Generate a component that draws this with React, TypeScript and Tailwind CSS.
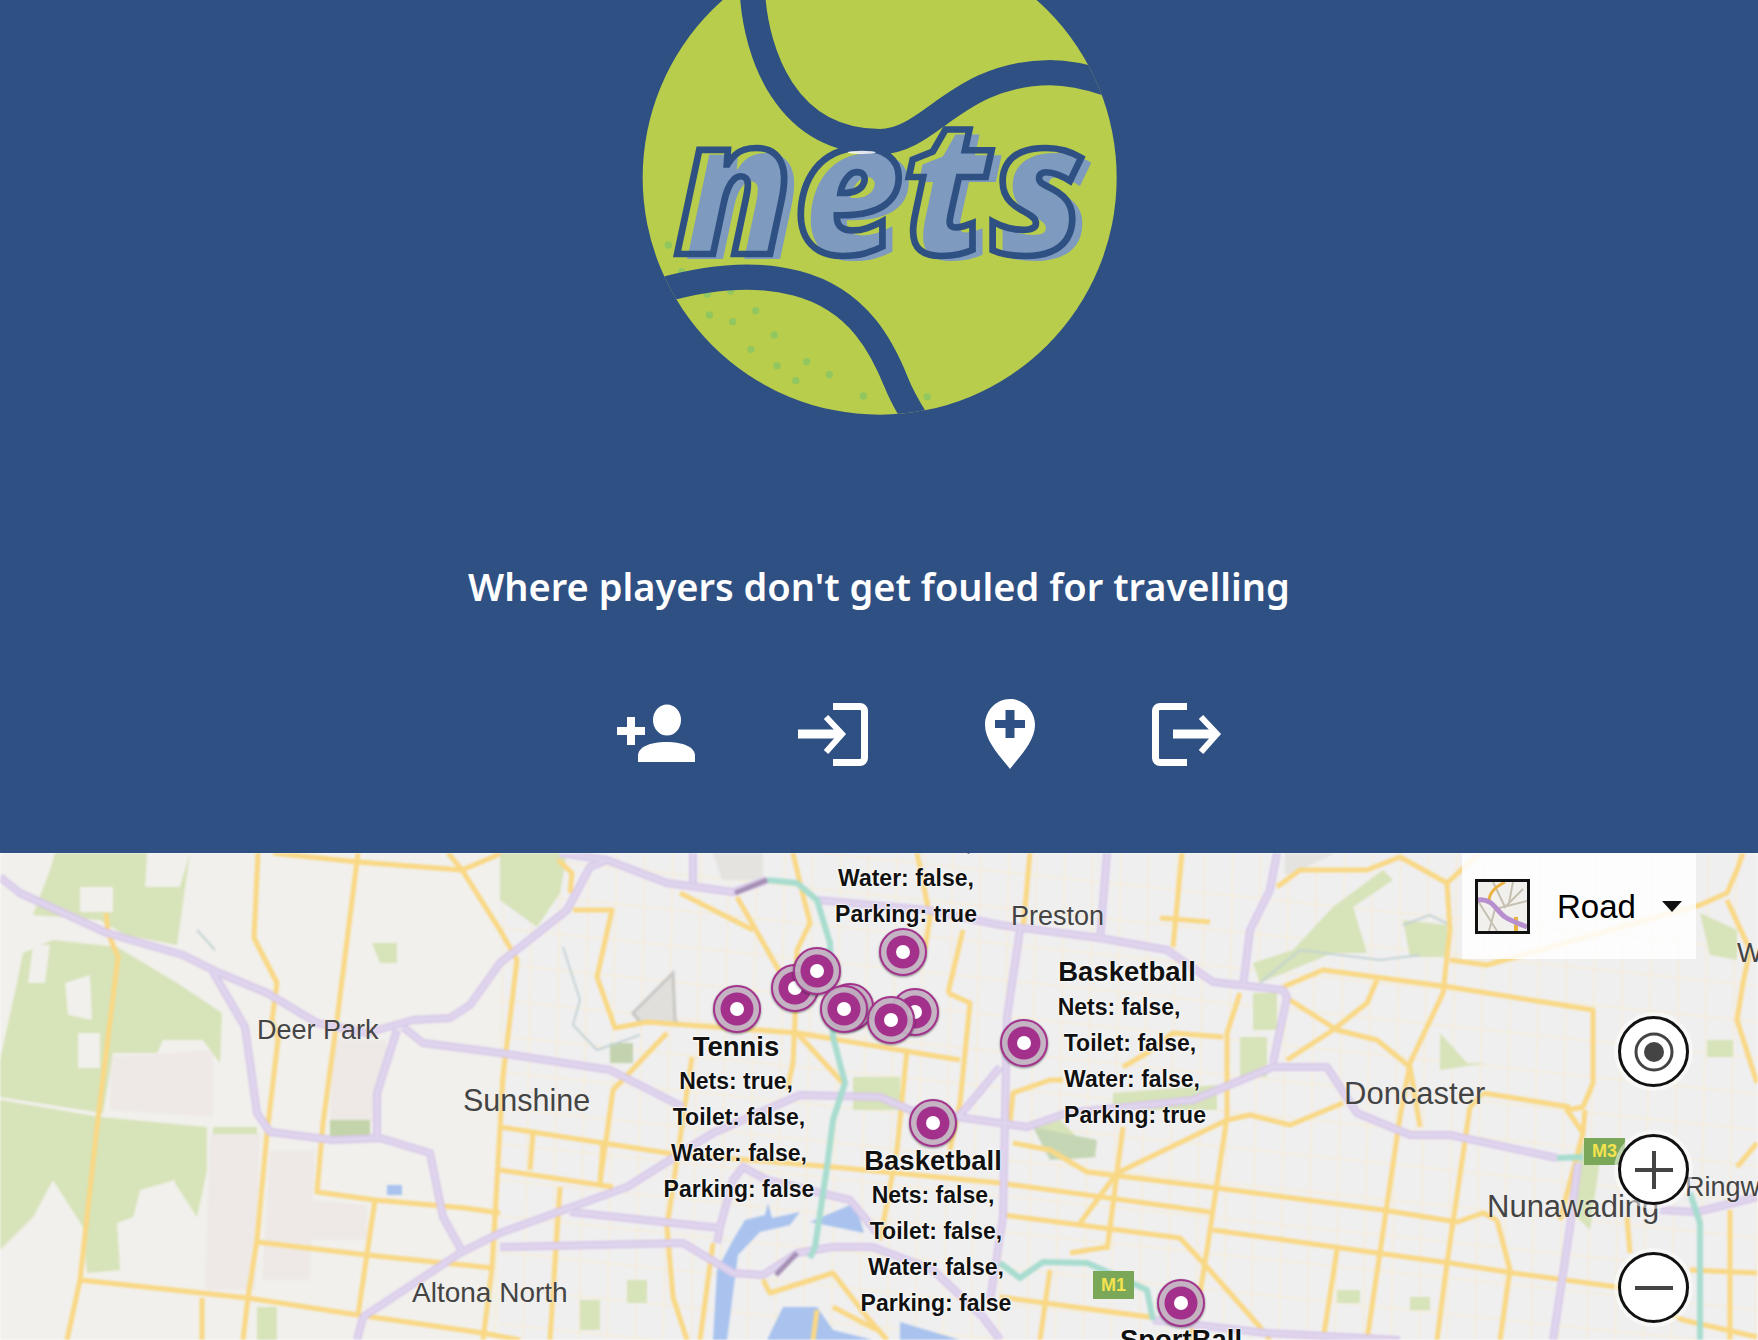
const BLUE = "#2f5083";

// map data, all in page coordinates (viewBox starts at y=853)
const yellowRoads = [
  "258,853 254,938 277,983 272,1020 278,1040 267,1133 257,1240 248,1297 243,1340",
  "358,853 337,1020 323,1123 317,1192 375,1200 465,1208 500,1213",
  "106,913 108,933 118,957 97,1127 80,1280 67,1340",
  "80,1280 248,1298 358,1315 483,1333 520,1340",
  "257,1242 367,1255 493,1268",
  "375,1200 358,1315",
  "273,853 358,862 462,870 500,930 517,960 503,1077 492,1268 483,1340",
  "448,853 462,870 493,857 500,853",
  "202,1298 202,1340",
  "558,860 572,873 570,893",
  "573,910 612,910 597,977 615,1028 647,1022 797,1033 960,1060",
  "667,1033 613,1090 600,1183",
  "948,993 970,1003 960,1103 950,1150",
  "963,930 948,993",
  "500,1127 667,1153 833,1167 1000,1183 1210,1212",
  "500,1170 613,1187",
  "533,1133 530,1170",
  "560,1187 550,1340",
  "603,1143 600,1183",
  "680,893 753,930",
  "737,897 777,967 795,1000",
  "793,853 800,883 810,923 797,950 795,1020 793,1063 787,1090",
  "797,1033 843,1083",
  "917,853 930,917 925,950",
  "907,1050 897,1150 880,1240",
  "692,1057 667,1227 673,1297 687,1340",
  "713,1243 700,1340",
  "763,1280 770,1293 833,1273 867,1317 887,1340",
  "817,1310 813,1340",
  "833,1307 877,1330",
  "1030,853 1023,930",
  "1182,853 1173,947",
  "1160,918 1210,922",
  "1277,887 1300,870 1367,870 1400,857 1447,883 1450,930 1443,993 1410,1063 1400,1117 1367,1340",
  "1283,987 1323,970 1450,987 1593,1010 1593,1083 1583,1107 1567,1110 1583,1133",
  "1290,1000 1337,1030 1377,1040 1410,1067 1420,1127",
  "1377,980 1367,1003 1333,1030 1287,1060",
  "1240,993 1227,1033 1227,1117 1207,1250 1200,1293 1190,1340",
  "1010,1123 1013,1093 1050,1080 1063,1080",
  "1123,1067 1147,1053 1173,1033 1223,1037",
  "1227,1120 1117,1173 1080,1223",
  "1227,1120 1250,1115 1290,1125 1343,1103",
  "1123,1127 1117,1173 1107,1250",
  "1013,1143 1050,1150 1087,1172 1217,1188 1383,1210 1457,1222 1483,1213 1497,1220",
  "1003,1215 1180,1238 1207,1267 1260,1327 1270,1340",
  "1213,1230 1377,1253 1450,1263 1513,1273 1617,1287 1683,1320 1757,1337",
  "1470,1107 1447,1263 1437,1340",
  "1337,1250 1323,1340",
  "1050,1270 1040,1340",
  "1000,1297 1150,1317",
  "1070,1253 1107,1247",
  "1483,1093 1570,1107",
  "1450,960 1487,965 1700,905 1727,893 1737,870 1743,853",
  "1727,900 1750,950 1743,983 1737,1020 1757,1083",
  "1470,1107 1483,1093",
  "1497,1220 1510,1270 1500,1340",
  "1585,1110 1583,1133 1560,1220",
  "1627,1217 1630,1253",
  "1730,1210 1730,1340",
  "1690,1270 1757,1273",
  "1737,1167 1757,1143",
  "1447,883 1480,853",
];

const purpleRoads = [
  "0,877 20,893 107,933 183,955 217,972 267,993 317,1023 367,1033 413,1020 450,1018 470,1005 500,963 567,910 590,867 607,860 667,883 733,892 767,880",
  "560,853 607,860",
  "213,972 245,1027 257,1113 270,1132 333,1140 380,1138 430,1153 443,1217 463,1253",
  "397,1030 377,1093 377,1137",
  "403,1027 423,1043 500,1053 610,1070 683,1107",
  "357,1340 363,1317 460,1253 500,1233 627,1187 713,1133 800,1095 880,1097 910,1110 957,1117 1000,1123 1027,1127 1067,1113 1193,1100 1273,1067 1327,1067 1357,1113 1410,1135 1450,1135 1557,1158",
  "500,1247 683,1243 733,1273 763,1275 797,1253 833,1247 873,1247 933,1270 983,1317 1000,1340",
  "570,1212 720,1228 717,1243",
  "720,1227 733,1180 743,1167 767,1180 850,1200 877,1233",
  "817,900 927,910 1000,925 1100,938 1167,950 1213,982 1283,990 1287,997 1273,1063",
  "1107,853 1100,940",
  "1020,930 1007,1017 1003,1217 990,1300",
  "1000,1067 967,1107 957,1117",
  "1277,853 1270,890 1250,930 1243,987",
  "693,853 693,883",
  "1578,1163 1570,1227 1553,1340",
  "1660,1210 1697,1212 1757,1197",
  "1153,1320 1267,1333 1400,1340",
];

const tealRoads = [
  "767,880 797,883 817,900 830,943 833,1037 845,1083 833,1120 827,1167 815,1247 810,1258",
  "1000,1263 1020,1278 1043,1262 1087,1263 1110,1273 1147,1290 1153,1320",
  "1557,1158 1583,1157",
  "1690,1193 1700,1223 1700,1340",
];

const greenAreas = [
  "55,853 190,853 177,945 125,935 100,920 33,915 50,870",
  "17,983 23,953 53,940 117,947 177,983 222,1013 220,1063 203,1040 163,1040 157,1053 113,1053 103,1113 0,1097 0,1060",
  "0,1100 100,1117 207,1127 207,1170 197,1217 173,1180 133,1217 117,1223 120,1270 87,1273 83,1227 53,1180 33,1217 0,1250",
  "500,853 567,853 560,893 537,927 500,900",
  "1293,950 1333,907 1383,870 1393,880 1353,907 1367,953 1333,953 1260,983 1253,963",
  "1403,920 1447,925 1447,957 1410,957",
  "1240,1037 1267,1037 1267,1077 1240,1077",
  "1253,993 1277,993 1277,1030 1253,1030",
  "1033,1127 1060,1120 1097,1157 1060,1160",
  "1113,1093 1217,1085 1217,1110 1113,1110",
  "1440,1033 1467,1063 1487,1063 1440,1070",
  "853,1077 900,1077 900,1110 853,1110",
  "1700,913 1737,930 1737,960 1710,955",
  "1707,1040 1733,1040 1733,1057 1707,1057",
  "257,1307 277,1307 277,1340 257,1340",
  "580,1300 600,1300 600,1330 580,1330",
  "627,1280 647,1280 647,1303 627,1303",
  "372,943 397,943 397,963 380,963",
  "1580,1140 1600,1160 1590,1230 1570,1210",
  "1337,1290 1360,1290 1360,1303 1337,1303",
  "1410,1297 1430,1297 1430,1310 1410,1310",
];

// the pale gaps in the farmland
const clearings = [
  "65,983 90,975 92,1020 68,1015",
  "78,1033 100,1033 100,1068 78,1068",
  "33,945 50,945 45,983 28,983",
  "80,887 113,887 113,912 80,912",
  "147,853 190,853 180,887 145,887",
  "140,1190 175,1180 170,1230 130,1230",
];

const pinkAreas = [
  "110,1057 213,1050 213,1117 110,1110",
  "210,1133 260,1133 255,1290 205,1290",
  "310,1200 367,1205 367,1240 310,1240",
  "333,1040 387,1040 380,1123 330,1120",
  "270,1150 315,1150 310,1280 262,1280",
];

const waterAreas = [
  "767,1340 783,1307 817,1307 833,1330 873,1340",
  "713,1340 717,1270 733,1240 745,1220 765,1215 768,1203 772,1218 800,1212 790,1225 760,1232 738,1255 727,1340",
  "810,1222 855,1203 864,1233 840,1228",
  "387,1185 402,1185 402,1195 387,1195",
  "900,1322 960,1340 900,1340",
];

const creeks = [
  "563,947 580,1000 573,1025 597,1050 640,1035",
  "1260,983 1300,950 1380,960 1420,955",
  "1403,925 1430,915 1450,925",
  "197,930 215,950",
];

const pins = [
  [737, 1009], [795, 988], [817, 971], [850, 1007], [844, 1009], [903, 952],
  [915, 1012], [891, 1020], [1024, 1043], [933, 1123], [1181, 1303],
];

const placeLabels = [
  { text: "Deer Park", x: 257, y: 1030, size: "text-[27px]" },
  { text: "Sunshine", x: 463, y: 1100, size: "text-[30.5px]" },
  { text: "Altona North", x: 412, y: 1293, size: "text-[28px]" },
  { text: "Preston", x: 1011, y: 916, size: "text-[27px]" },
  { text: "Doncaster", x: 1344, y: 1093, size: "text-[31px]" },
  { text: "Nunawading", x: 1487, y: 1206, size: "text-[31px]" },
  { text: "Ringw", x: 1685, y: 1187, size: "text-[27px]" },
  { text: "W", x: 1737, y: 953, size: "text-[27px]" },
];

// x and y are where the stack starts; dx nudges a line, the labels wrap unevenly on the real map
const popups = [
  {
    x: 906,
    y: 824,
    lines: [{ text: "Toilet: false," }, { text: "Water: false," }, { text: "Parking: true" }],
  },
  {
    title: "Tennis",
    tight: true,
    x: 736,
    y: 1030,
    lines: [
      { text: "Nets: true," },
      { text: "Toilet: false,", dx: 6 },
      { text: "Water: false,", dx: 6 },
      { text: "Parking: false", dx: 6 },
    ],
  },
  {
    title: "Basketball",
    x: 1127,
    y: 954,
    lines: [
      { text: "Nets: false,", dx: -16 },
      { text: "Toilet: false,", dx: 6 },
      { text: "Water: false,", dx: 10 },
      { text: "Parking: true", dx: 16 },
    ],
  },
  {
    title: "Basketball",
    tight: true,
    x: 933,
    y: 1144,
    lines: [
      { text: "Nets: false," },
      { text: "Toilet: false,", dx: 6 },
      { text: "Water: false,", dx: 6 },
      { text: "Parking: false", dx: 6 },
    ],
  },
  { title: "SportBall", x: 1181, y: 1322, lines: [] },
];

const ballDots = [
  [145, 735], [185, 815], [262, 882], [332, 873], [268, 945], [338, 965], [407, 932], [463, 1005],
  [393, 1048], [471, 1097], [560, 1085], [527, 1142], [628, 1124], [730, 1188], [922, 1190],
];

function Logo() {
  return (
    <svg width="520" height="430" viewBox="0 0 1560 1290" className="ml-[2px] block shrink-0">
      <defs>
        <clipPath id="ball">
          <circle cx="779" cy="533" r="711" />
        </clipPath>
      </defs>
      <circle cx="779" cy="533" r="711" fill="#b8cd4b" />
      <g clipPath="url(#ball)">
        {ballDots.map(([x, y]) => (
          <circle key={`${x}-${y}`} cx={x} cy={y} r="11" fill="#92c760" />
        ))}
        <path
          d="M398 -10 C410 150 490 425 780 425 C930 425 1010 220 1290 218 C1350 218 1400 230 1460 250"
          fill="none"
          stroke={BLUE}
          strokeWidth="76"
        />
        <path
          d="M120 872 C250 835 400 815 530 850 C720 900 790 1050 830 1150 C850 1200 870 1230 895 1270"
          fill="none"
          stroke={BLUE}
          strokeWidth="76"
        />
      </g>
      <text
        x="195"
        y="777"
        textLength="1230"
        lengthAdjust="spacingAndGlyphs"
        fill="#7f9abf"
        fontSize="565"
        fontWeight="800"
        fontStyle="italic"
        fontFamily="'Open Sans', sans-serif"
      >
        nets
      </text>
      <text
        x="165"
        y="762"
        textLength="1230"
        lengthAdjust="spacingAndGlyphs"
        fill="none"
        stroke={BLUE}
        strokeWidth="20"
        fontSize="565"
        fontWeight="800"
        fontStyle="italic"
        fontFamily="'Open Sans', sans-serif"
      >
        nets
      </text>
      <ellipse cx="725" cy="457" rx="42" ry="5" fill="#ffffff" opacity="0.85" />
    </svg>
  );
}

function NavIcons() {
  return (
    <div className="ml-[85px] mt-[83px] flex gap-[97px]">
      {/* add user */}
      <svg width="80" height="80" viewBox="0 0 80 80">
        <ellipse cx="51" cy="26" rx="14" ry="15.5" fill="white" />
        <path d="M22 68 V62 C22 53 34 48 50.5 48 S79 53 79 62 V68 Z" fill="white" />
        <path d="M1 33 H11 V23 H19 V33 H29 V41 H19 V51 H11 V41 H1 Z" fill="white" />
      </svg>
      {/* sign in */}
      <svg width="80" height="80" viewBox="0 0 80 80" fill="none" stroke="white" strokeWidth="7">
        <path d="M40 12.5 H67 A4.5 4.5 0 0 1 71.5 17 V64 A4.5 4.5 0 0 1 67 68.5 H40" />
        <path d="M5 40 H49" strokeWidth="9" />
        <path d="M33 23 L49 40 L33 58" strokeWidth="6" />
      </svg>
      {/* add place */}
      <svg width="80" height="80" viewBox="0 0 80 80">
        <path d="M40 5 C54 5 65 17 65 31 C65 47 50 62 40 75 C30 62 15 47 15 31 C15 17 26 5 40 5 Z" fill="white" />
        <path d="M35.5 16 H44.5 V26 H55 V34 H44.5 V44 H35.5 V34 H25 V26 H35.5 Z" fill={BLUE} />
      </svg>
      {/* sign out */}
      <svg width="80" height="80" viewBox="0 0 80 80" fill="none" stroke="white" strokeWidth="7">
        <path d="M40 12.5 H13 A4.5 4.5 0 0 0 8.5 17 V64 A4.5 4.5 0 0 0 13 68.5 H40" />
        <path d="M26 40 H70" strokeWidth="9" />
        <path d="M54 23 L70 40 L54 58" strokeWidth="6" />
      </svg>
    </div>
  );
}

function MapBase() {
  return (
    <svg viewBox="0 853 1758 487" width="1758" height="487" className="block blur-[1px]">
      <rect x="0" y="853" width="1758" height="487" fill="#f1f0ec" />
      <rect x="500" y="853" width="1258" height="487" fill="#f0eff0" />

      {Array.from({ length: 46 }, (_, i) => (
        <line key={`v${i}`} x1={505 + i * 28} y1="853" x2={495 + i * 28} y2="1340" stroke="#f4edd8" strokeWidth="1.5" />
      ))}
      {Array.from({ length: 16 }, (_, i) => (
        <line key={`h${i}`} x1="500" y1={820 + i * 36} x2="1758" y2={950 + i * 36} stroke="#f4edd8" strokeWidth="1.5" />
      ))}

      {pinkAreas.map((p) => <polygon key={p} points={p} fill="#eee9e6" />)}
      {greenAreas.map((p) => <polygon key={p} points={p} fill="#d7e3b9" />)}
      {clearings.map((p) => <polygon key={p} points={p} fill="#f1f0ec" />)}

      <rect x="330" y="1120" width="40" height="17" fill="#c3d3aa" />
      <rect x="213" y="1127" width="44" height="7" fill="#d7e3b9" />
      <rect x="610" y="1043" width="23" height="20" fill="#c3d3b0" />
      <polygon points="1033,1127 1097,1140 1095,1157 1050,1160" fill="#c5d6b5" />

      {/* airports */}
      <polygon points="633,1013 673,973 675,1020 680,1025 640,1022" fill="#e0dfdc" stroke="#c9c7c4" strokeWidth="3" />
      <polygon points="713,853 763,853 763,880 722,880" fill="#e4e3e0" />
      <polygon points="1285,853 1335,853 1300,870 1285,875" fill="#e4e3e0" />

      {waterAreas.map((p) => <polygon key={p} points={p} fill="#a9c3ee" />)}
      {creeks.map((p) => <polyline key={p} points={p} fill="none" stroke="#c3d2d3" strokeWidth="2" />)}

      {yellowRoads.map((p) => (
        <polyline key={p} points={p} fill="none" stroke="#f9d885" strokeWidth="5" strokeLinejoin="round" />
      ))}
      {purpleRoads.map((p) => (
        <polyline key={p} points={p} fill="none" stroke="#d8c9e9" strokeWidth="8" strokeLinejoin="round" />
      ))}
      {purpleRoads.map((p) => (
        <polyline key={`c${p}`} points={p} fill="none" stroke="#e0d5ee" strokeWidth="4" strokeLinejoin="round" />
      ))}
      {tealRoads.map((p) => (
        <polyline key={p} points={p} fill="none" stroke="#a8dccf" strokeWidth="6" strokeLinejoin="round" />
      ))}
      <polyline points="735,893 767,880" fill="none" stroke="#a58fb5" strokeWidth="5" />
      <polyline points="776,1275 797,1253" fill="none" stroke="#a58fb5" strokeWidth="5" />
    </svg>
  );
}

function Pin({ x, y }: { x: number; y: number }) {
  return (
    <svg
      width="50"
      height="50"
      viewBox="0 0 50 50"
      className="absolute -translate-x-1/2 -translate-y-1/2 drop-shadow-[0_1px_1px_rgba(0,0,0,0.45)]"
      style={{ left: x, top: y - 853 }}
    >
      <circle cx="25" cy="25" r="23" fill="#c9b8c9" fillOpacity="0.9" stroke="#a3338d" strokeWidth="2" />
      <circle cx="25" cy="25" r="16.5" fill="#a3318c" />
      <circle cx="25" cy="25" r="7" fill="white" />
    </svg>
  );
}

function Popup({ title, tight, x, y, lines }: (typeof popups)[number]) {
  return (
    <div
      className="absolute flex -translate-x-1/2 flex-col items-center whitespace-nowrap font-bold text-[#111] [text-shadow:0_0_2px_#fff,0_0_2px_#fff,0_0_3px_#fff]"
      style={{ left: x, top: y - 853 }}
    >
      {title && <span className={`text-[27.5px] ${tight ? "leading-[33px]" : "leading-[35px]"}`}>{title}</span>}
      {lines.map((l) => (
        <span key={l.text} className="text-[23px] leading-[36px]" style={{ marginLeft: l.dx ?? 0 }}>
          {l.text}
        </span>
      ))}
    </div>
  );
}

function RoadControl() {
  return (
    <div className="absolute right-[62px] top-0 flex h-[106px] w-[234px] items-center gap-[27px] bg-white/85 pl-[13px]">
      <svg width="55" height="55" viewBox="0 0 55 55" className="shrink-0">
        <rect width="55" height="55" fill="#f1f0ec" />
        <path d="M3 22 L22 52 M14 52 L20 30 L52 22 M18 3 L30 28 L48 10 M38 3 L34 24" fill="none" stroke="#c6c0b2" strokeWidth="2" />
        <path d="M30 3 C20 8 14 14 14 22" fill="none" stroke="#eab23f" strokeWidth="3" />
        <path d="M41 38 V52" fill="none" stroke="#eab23f" strokeWidth="4" />
        <path d="M3 21 C18 19 21 32 30 38 C38 43 45 45 52 48" fill="none" stroke="#b78fce" strokeWidth="5" />
        <rect x="1.5" y="1.5" width="52" height="52" fill="none" stroke="#111" strokeWidth="3" />
      </svg>
      <span className="text-[33px] leading-none text-black">Road</span>
      <svg width="20" height="11" viewBox="0 0 20 11" className="-ml-px">
        <path d="M0 0 H20 L10 11 Z" fill="#111" />
      </svg>
    </div>
  );
}

function RoundButton({ children }: { children: React.ReactNode }) {
  return (
    <button className="flex size-[71px] items-center justify-center rounded-full border-[3px] border-[#111] bg-white shadow-[0_0_0_4px_rgba(255,255,255,0.5)]">
      {children}
    </button>
  );
}

function MapControls() {
  return (
    <div className="absolute right-[69px] top-[163px] flex flex-col gap-[47px]">
      <RoundButton>
        <svg width="44" height="44" viewBox="0 0 44 44">
          <circle cx="22" cy="22" r="18" fill="none" stroke="#444" strokeWidth="3" />
          <circle cx="22" cy="22" r="10" fill="#444" />
        </svg>
      </RoundButton>
      <RoundButton>
        <svg width="38" height="38" viewBox="0 0 38 38">
          <path d="M0 19 H38 M19 0 V38" stroke="#444" strokeWidth="4" />
        </svg>
      </RoundButton>
      <RoundButton>
        <svg width="38" height="38" viewBox="0 0 38 38">
          <path d="M0 19 H38" stroke="#444" strokeWidth="4" />
        </svg>
      </RoundButton>
    </div>
  );
}

function MapView() {
  return (
    <section className="relative h-[487px] overflow-hidden font-['Liberation_Sans',Arial,sans-serif]">
      <MapBase />

      <span className="absolute left-[1093px] top-[418px] flex h-[28px] w-[41px] items-center justify-center bg-[#7aa858] text-[18px] font-bold text-[#f5e24f]">M1</span>
      <span className="absolute left-[1584px] top-[285px] flex h-[27px] w-[41px] items-center justify-center bg-[#7aa858] text-[18px] font-bold text-[#f5e24f]">M3</span>

      {placeLabels.map((l) => (
        <span
          key={l.text}
          className={`absolute -translate-y-1/2 whitespace-nowrap leading-none text-[#444] [text-shadow:0_0_2px_#f4f3f0] ${l.size}`}
          style={{ left: l.x, top: l.y - 853 }}
        >
          {l.text}
        </span>
      ))}

      {pins.map(([x, y]) => (
        <Pin key={`${x}-${y}`} x={x} y={y} />
      ))}

      {popups.map((p) => (
        <Popup key={`${p.x}-${p.y}`} {...p} />
      ))}

      <RoadControl />
      <MapControls />
    </section>
  );
}

export default function App() {
  return (
    <main className="h-[1340px] w-[1758px] overflow-hidden">
      <header className="flex h-[853px] flex-col items-center bg-[#2f5083]">
        <Logo />
        <h1 className="mt-[131px] font-['Noto_Sans',sans-serif] text-[38px] font-semibold leading-[50px] text-white">
          Where players don't get fouled for travelling
        </h1>
        <NavIcons />
      </header>
      <MapView />
    </main>
  );
}
